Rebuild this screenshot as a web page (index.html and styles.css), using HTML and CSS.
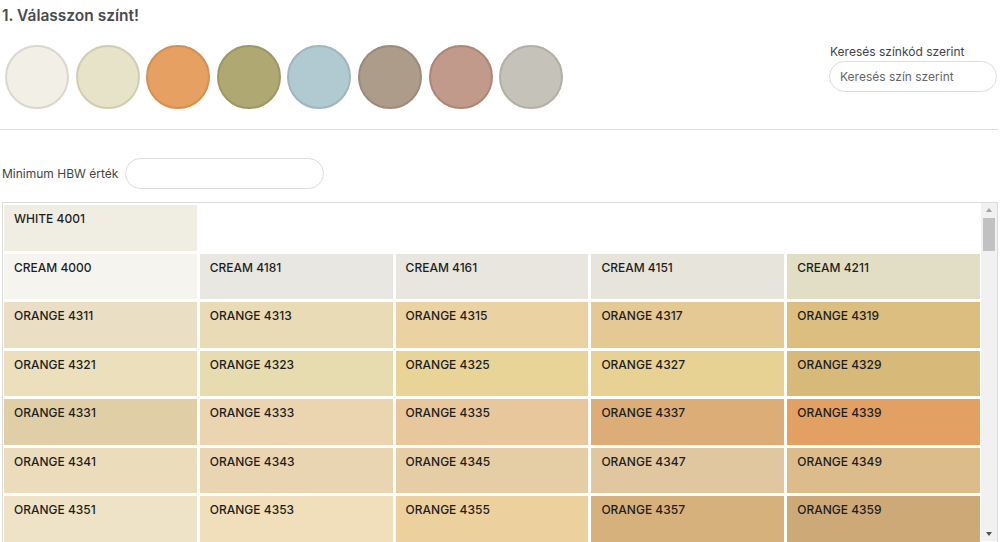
FILE: index.html
```html
<!DOCTYPE html>
<html lang="hu">
<head>
<meta charset="utf-8">
<title>Válasszon színt</title>
<link rel="stylesheet" href="styles.css">
</head>
<body>
<div class="page">
  <h2 class="title">1. Válasszon színt!</h2>
  <div class="header">
    <div class="swatches">
      <span class="swatch s1"></span>
      <span class="swatch s2"></span>
      <span class="swatch s3"></span>
      <span class="swatch s4"></span>
      <span class="swatch s5"></span>
      <span class="swatch s6"></span>
      <span class="swatch s7"></span>
      <span class="swatch s8"></span>
    </div>
    <div class="search">
      <label class="search-label">Keresés színkód szerint</label>
      <input class="search-input" type="text" placeholder="Keresés szín szerint">
    </div>
  </div>
  <hr class="divider">
  <div class="filter">
    <label class="filter-label">Minimum HBW érték</label>
    <input class="filter-input" type="text">
  </div>
  <div class="results">
    <div class="viewport">
      <div class="grid">
        <div class="cell" style="background:#f0ede3">WHITE 4001</div>
        <div class="cell newrow" style="background:#f5f4ef">CREAM 4000</div>
        <div class="cell" style="background:#e9e7e1">CREAM 4181</div>
        <div class="cell" style="background:#e8e6df">CREAM 4161</div>
        <div class="cell" style="background:#e7e4db">CREAM 4151</div>
        <div class="cell" style="background:#e2dec5">CREAM 4211</div>
        <div class="cell" style="background:#eadfc4">ORANGE 4311</div>
        <div class="cell" style="background:#e9dbb6">ORANGE 4313</div>
        <div class="cell" style="background:#ead2a3">ORANGE 4315</div>
        <div class="cell" style="background:#e5c994">ORANGE 4317</div>
        <div class="cell" style="background:#dbbe80">ORANGE 4319</div>
        <div class="cell" style="background:#ebdfbc">ORANGE 4321</div>
        <div class="cell" style="background:#e7dcb0">ORANGE 4323</div>
        <div class="cell" style="background:#e9d497">ORANGE 4325</div>
        <div class="cell" style="background:#e7d294">ORANGE 4327</div>
        <div class="cell" style="background:#d7b97a">ORANGE 4329</div>
        <div class="cell" style="background:#e0cfa6">ORANGE 4331</div>
        <div class="cell" style="background:#ebd5b1">ORANGE 4333</div>
        <div class="cell" style="background:#e7c79b">ORANGE 4335</div>
        <div class="cell" style="background:#dcad77">ORANGE 4337</div>
        <div class="cell" style="background:#e3a063">ORANGE 4339</div>
        <div class="cell" style="background:#ebdcbb">ORANGE 4341</div>
        <div class="cell" style="background:#ead5b2">ORANGE 4343</div>
        <div class="cell" style="background:#e5cda6">ORANGE 4345</div>
        <div class="cell" style="background:#e0c79f">ORANGE 4347</div>
        <div class="cell" style="background:#ddbc8c">ORANGE 4349</div>
        <div class="cell" style="background:#efe3c7">ORANGE 4351</div>
        <div class="cell" style="background:#f0dfba">ORANGE 4353</div>
        <div class="cell" style="background:#ecd19f">ORANGE 4355</div>
        <div class="cell" style="background:#d7b17b">ORANGE 4357</div>
        <div class="cell" style="background:#cea978">ORANGE 4359</div>
      </div>
    </div>
    <div class="scrollbar">
      <span class="arrow up"></span>
      <span class="track"><span class="thumb"></span></span>
      <span class="arrow down"></span>
    </div>
  </div>
</div>
</body>
</html>
```
FILE: styles.css
```css
html, body {
  margin: 0;
  padding: 0;
  background: #ffffff;
  font-family: "Inter", "Liberation Sans", sans-serif;
  color: #222;
  overflow: hidden;
}

.page {
  width: 998px;
}

.title {
  margin: 0;
  padding: 6px 0 0 2px;
  font-size: 15.5px;
  line-height: 20px;
  font-weight: 600;
  color: #4b4b4b;
}

.header {
  display: flex;
  justify-content: space-between;
  align-items: flex-start;
  padding: 19px 0 0 5px;
}

.swatches {
  display: flex;
  gap: 6.6px;
}

.swatch {
  display: block;
  width: 60px;
  height: 60px;
  border-radius: 50%;
  border: 2px solid;
}

.s1 { background: #f2efe6; border-color: #dad7cf; }
.s2 { background: #e6e3c9; border-color: #d1cdb2; }
.s3 { background: #e5a062; border-color: #d48f52; }
.s4 { background: #afa872; border-color: #9d9763; }
.s5 { background: #b1c9d0; border-color: #9fb6bd; }
.s6 { background: #ad9c8a; border-color: #9b8b7a; }
.s7 { background: #c29a8b; border-color: #ae8677; }
.s8 { background: #c5c2b9; border-color: #b2afa6; }

.search {
  display: flex;
  flex-direction: column;
  width: 168px;
  padding-right: 1px;
}

.search-label {
  font-size: 12px;
  line-height: 14px;
  color: #444;
  padding-left: 1px;
}

.search-input,
.filter-input {
  box-sizing: border-box;
  height: 31px;
  border: 1px solid #dddddd;
  border-radius: 16px;
  font-family: inherit;
  font-size: 12px;
  color: #444;
  outline: none;
  background: #fff;
}

.search-input {
  margin-top: 2px;
  width: 168px;
  padding: 0 10px;
}

.search-input::placeholder {
  color: #666;
}

.divider {
  margin: 20px 0 0 0;
  border: 0;
  border-top: 1px solid #dcdcdc;
  height: 0;
  width: 998px;
}

.filter {
  display: flex;
  align-items: center;
  gap: 7px;
  padding: 28px 0 0 2px;
}

.filter-label {
  font-size: 12px;
  color: #444;
}

.filter-input {
  width: 199px;
}

.results {
  display: flex;
  margin: 13px 0 0 2px;
  width: 996px;
  height: 345px;
  box-sizing: border-box;
  border: 1px solid #dcdcdc;
  overflow: hidden;
}

.viewport {
  flex: 1;
  overflow: hidden;
}

.grid {
  display: grid;
  grid-template-columns: repeat(5, 1fr);
  grid-auto-rows: 45.5px;
  gap: 3px;
  padding: 2px 1px 2px 1px;
}

.cell {
  padding: 7px 10px 8px;
  font-size: 12px;
  line-height: 14px;
  font-weight: 500;
  color: #1e1e1e;
}

.newrow {
  grid-column-start: 1;
}

.scrollbar {
  display: flex;
  flex-direction: column;
  width: 16px;
  background: #f1f1f1;
  height: 338px;
}

.arrow {
  display: flex;
  justify-content: center;
  align-items: center;
  height: 14px;
}

.arrow::before {
  content: "";
  width: 0;
  height: 0;
  border-left: 3.5px solid transparent;
  border-right: 3.5px solid transparent;
}

.up::before {
  border-bottom: 4px solid #a3a3a3;
}

.down::before {
  border-top: 4px solid #505050;
}

.track {
  flex: 1;
  padding: 1px 2px;
}

.thumb {
  display: block;
  height: 33px;
  background: #c1c1c1;
}
```
